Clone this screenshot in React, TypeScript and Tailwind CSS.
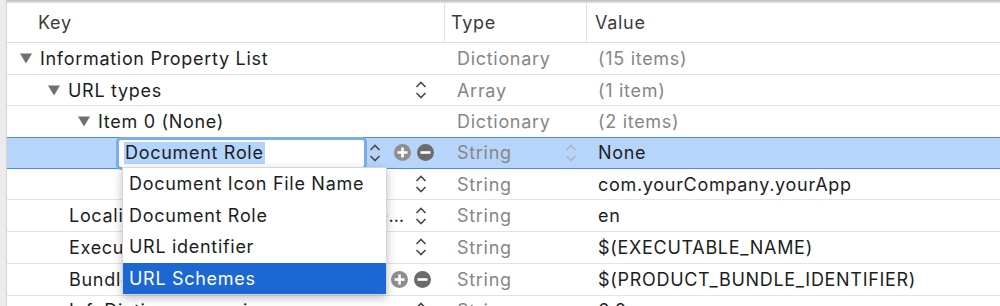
import React from "react";

type Row = {
  key: string;
  depth: number;
  open?: boolean;
  type: string;
  value: string;
  dim?: boolean;
  stepper?: boolean;
  addRemove?: boolean;
};

const rows: Row[] = [
  { key: "Information Property List", depth: 0, open: true, type: "Dictionary", value: "(15 items)", dim: true },
  { key: "URL types", depth: 1, open: true, type: "Array", value: "(1 item)", dim: true, stepper: true },
  { key: "Item 0 (None)", depth: 2, open: true, type: "Dictionary", value: "(2 items)", dim: true },
  { key: "", depth: 3, type: "String", value: "None" },
  { key: "", depth: 3, type: "String", value: "com.yourCompany.yourApp", stepper: true },
  { key: "Localization native development region", depth: 1, type: "String", value: "en", stepper: true },
  { key: "Executable file", depth: 1, type: "String", value: "$(EXECUTABLE_NAME)", stepper: true },
  { key: "Bundle identifier", depth: 1, type: "String", value: "$(PRODUCT_BUNDLE_IDENTIFIER)", addRemove: true },
  { key: "InfoDictionary version", depth: 1, type: "String", value: "6.0", stepper: true },
];

// open rows start at the triangle, leaf rows line up with their sibling's text
const openPad = ["pl-[13px]", "pl-[41px]", "pl-[71px]", "pl-[71px]"];
const leafPad = ["pl-[33px]", "pl-[62px]", "pl-[91px]", "pl-[91px]"];

function Triangle() {
  return (
    <svg width="12" height="11" viewBox="0 0 12 11" className="mr-[8px] shrink-0">
      <path d="M0 0.5 H12 L6 10.5 Z" fill="#6f6f6f" />
    </svg>
  );
}

function Stepper({ light }: { light?: boolean }) {
  const c = light ? "#a9b6c6" : "#4a4a4a";
  return (
    <svg width="12" height="20" viewBox="0 0 12 20" className="shrink-0">
      <path d="M1.5 7 L6 2.5 L10.5 7" fill="none" stroke={c} strokeWidth="1.6" />
      <path d="M1.5 13 L6 17.5 L10.5 13" fill="none" stroke={c} strokeWidth="1.6" />
    </svg>
  );
}

function Circle({ minus }: { minus?: boolean }) {
  return (
    <svg width="17" height="17" viewBox="0 0 17 17" className="shrink-0">
      <circle cx="8.5" cy="8.5" r="8.5" fill={minus ? "#6b6b6b" : "#8e8e8e"} />
      <rect x="3.5" y="7.2" width="10" height="2.6" fill="#fff" />
      {!minus && <rect x="7.2" y="3.5" width="2.6" height="10" fill="#fff" />}
    </svg>
  );
}

function KeyCell({ row, index }: { row: Row; index: number }) {
  if (index === 3) {
    return (
      <div className="flex items-center w-[438px] h-full pl-[109px]">
        <div className="w-[251px] h-[33px] rounded-[5px] border-[3px] border-[#7aaeea] bg-white flex items-center pl-[5px] -mb-[1px]">
          <span className="bg-[#b3d4fc] px-[1px] leading-[22px]">Document Role</span>
        </div>
        <div className="ml-[2px]"><Stepper /></div>
        <div className="ml-[13px]"><Circle /></div>
        <div className="ml-[6px]"><Circle minus /></div>
      </div>
    );
  }
  const pr = row.addRemove ? "pr-[14px]" : "pr-[18px]";
  return (
    <div className={`flex items-center w-[438px] h-full ${pr} ${row.open ? openPad[row.depth] : leafPad[row.depth]}`}>
      {row.open && <Triangle />}
      <span className="truncate">{row.key}</span>
      <div className="flex-1" />
      {row.stepper && <div className="pl-[10px]"><Stepper /></div>}
      {row.addRemove && (
        <div className="flex items-center gap-[6px] pl-[8px]">
          <Circle />
          <Circle minus />
        </div>
      )}
    </div>
  );
}

export default function App() {
  return (
    <div
      className="relative w-[1000px] h-[306px] overflow-hidden bg-white text-[18px] tracking-[0.7px] text-[#1d1d1d] flex"
      style={{ fontFamily: 'Inter, "Liberation Sans", sans-serif' }}
    >
      <div className="w-[7px] shrink-0 bg-[#ebebeb] border-r border-[#d2d2d2]" />
      <div className="flex-1 flex flex-col">
        <div className="h-[3px] shrink-0 bg-gradient-to-b from-[#bdbdbd] to-[#e4e4e4]" />
        <div className="h-[40px] shrink-0 flex items-center border-b border-[#dcdcdc] text-[#3b3b3b]">
          <div className="w-[438px] h-full flex items-center pl-[31px] border-r border-[#e2e2e2]">Key</div>
          <div className="w-[142px] h-full flex items-center pl-[6px] border-r border-[#e2e2e2]">Type</div>
          <div className="flex-1 h-full flex items-center pl-[8px]">Value</div>
        </div>
        {rows.map((row, i) => {
          const sel = i === 3;
          return (
            <div
              key={i}
              className={`h-[31.7px] shrink-0 flex items-center border-b ${
                sel ? "bg-[#b7d5fb] border-[#4c8ce0] border-t -mt-[1px]" : "border-[#e3e3e3]"
              }`}
            >
              <KeyCell row={row} index={i} />
              <div className="w-[142px] h-full flex items-center pl-[12px] pr-[10px] text-[#868686]">
                <span>{row.type}</span>
                <div className="flex-1" />
                {sel && <Stepper light />}
              </div>
              <div className={`flex-1 h-full flex items-center pl-[11px] ${row.dim ? "text-[#868686]" : "text-[#1d1d1d]"}`}>
                {row.value}
              </div>
            </div>
          );
        })}
      </div>

      <div className="absolute left-[122px] top-[167px] w-[265px] bg-white shadow-[0_3px_10px_rgba(0,0,0,0.25)] border border-[#d6d6d6] rounded-b-[3px]">
        {["Document Icon File Name", "Document Role", "URL identifier", "URL Schemes"].map((t, i) => (
          <div
            key={t}
            className={`h-[31.6px] flex items-center pl-[6px] ${i === 3 ? "bg-[#1b67d4] text-white" : "text-[#1d1d1d]"}`}
          >
            {t}
          </div>
        ))}
      </div>
    </div>
  );
}
